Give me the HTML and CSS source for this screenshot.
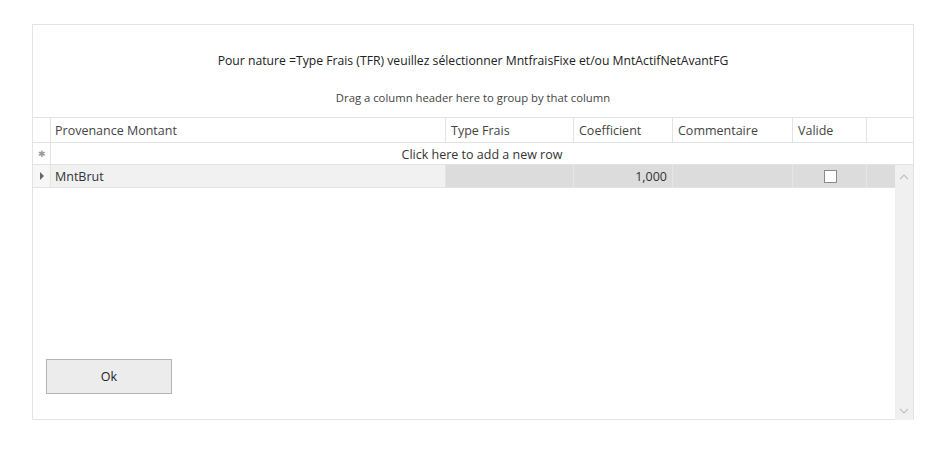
FILE: index.html
```html
<!DOCTYPE html>
<html lang="fr">
<head>
    <meta charset="UTF-8">
    <title>Provenance Montant</title>
    <link rel="stylesheet" href="styles.css">
</head>
<body>
    <div class="frame">
        <div class="group-panel">
            <div class="title">Pour nature =Type Frais (TFR) veuillez sélectionner MntfraisFixe et/ou MntActifNetAvantFG</div>
            <div class="drag-hint">Drag a column header here to group by that column</div>
        </div>

        <div class="row header-row">
            <div class="cell ind"></div>
            <div class="cell c-prov">Provenance Montant</div>
            <div class="cell c-type">Type Frais</div>
            <div class="cell c-coef">Coefficient</div>
            <div class="cell c-comm">Commentaire</div>
            <div class="cell c-valid">Valide</div>
            <div class="cell c-rest"></div>
        </div>

        <div class="row new-row">
            <div class="cell ind"><span class="star">&#10033;</span></div>
            <div class="cell add-row">Click here to add a new row</div>
        </div>

        <div class="grid-body">
            <div class="rows">
                <div class="row data-row">
                    <div class="cell ind"><span class="arrow"></span></div>
                    <div class="cell c-prov">MntBrut</div>
                    <div class="cell c-type"></div>
                    <div class="cell c-coef num">1,000</div>
                    <div class="cell c-comm"></div>
                    <div class="cell c-valid"><span class="check"></span></div>
                    <div class="cell c-last"></div>
                </div>
                <button class="ok-btn">Ok</button>
            </div>
            <div class="vscroll">
                <svg width="10" height="6" viewBox="0 0 10 6"><path d="M1 5 L5 1 L9 5" fill="none" stroke="#c2c2c2" stroke-width="1.2"/></svg>
                <svg width="10" height="6" viewBox="0 0 10 6"><path d="M1 1 L5 5 L9 1" fill="none" stroke="#c2c2c2" stroke-width="1.2"/></svg>
            </div>
        </div>
    </div>
</body>
</html>
```

FILE: styles.css
```css
body {
    margin: 0;
    background: white;
    font-family: 'Segoe UI', 'Open Sans', sans-serif;
    color: #333;
}
.frame {
    margin: 24px 0 0 32px;
    width: 880px;
    border: 1px solid #e3e3e3;
}
.group-panel {
    padding: 26px 0 11px;
    text-align: center;
}
.title {
    font-size: 12.2px;
    line-height: 20px;
    color: #222;
}
.drag-hint {
    margin-top: 19px;
    font-size: 11.3px;
    line-height: 16px;
    color: #444;
}
.row {
    display: flex;
    box-sizing: border-box;
    border-bottom: 1px solid #e3e3e3;
}
.cell {
    box-sizing: border-box;
    border-right: 1px solid #e3e3e3;
    padding: 0 4px;
    font-size: 12.5px;
    white-space: nowrap;
    overflow: hidden;
}
.ind { width: 18px; padding: 0; display: flex; align-items: center; justify-content: center; }
.c-prov { width: 395px; }
.c-type { width: 128px; }
.c-coef { width: 99px; }
.c-comm { width: 120px; }
.c-valid { width: 74px; }
.c-rest { width: 46px; border-right: none; }
.c-last { width: 28px; border-right: none; }

.header-row {
    border-top: 1px solid #e3e3e3;
    height: 26px;
    line-height: 26px;
    color: #444;
}
.header-row .c-type,
.header-row .c-coef,
.header-row .c-comm,
.header-row .c-valid { padding-left: 5px; }

.new-row {
    height: 22px;
    line-height: 23px;
}
.add-row {
    flex: 1;
    border-right: none;
    text-align: center;
}
.star {
    font-size: 9px;
    color: #9a9a9a;
    line-height: 1;
}
.arrow {
    width: 0;
    height: 0;
    border-top: 4px solid transparent;
    border-bottom: 4px solid transparent;
    border-left: 4px solid #666;
    margin-left: 1px;
}

.grid-body {
    display: flex;
    height: 254px;
}
.rows {
    flex: 1;
}
.data-row {
    height: 23px;
    line-height: 24px;
}
.data-row .cell {
    background: #dcdcdc;
    border-right-color: #e6e6e6;
}
.data-row .ind { background: #f7f7f7; border-right-color: #e3e3e3; }
.data-row .c-prov { background: #f1f1f1; border-right-color: #e3e3e3; }
.num { text-align: right; padding-right: 5px; }
.c-valid { display: flex; align-items: center; justify-content: center; }
.header-row .c-valid { display: block; }
.check {
    width: 11px;
    height: 11px;
    background: white;
    border: 1px solid #8a8a8a;
    margin-left: 2px;
}
.ok-btn {
    display: block;
    margin: 171px 0 0 13px;
    width: 126px;
    height: 35px;
    background: #ececec;
    border: 1px solid #b5b5b5;
    font-family: inherit;
    font-size: 12.5px;
    color: #222;
    padding: 0;
}
.vscroll {
    width: 18px;
    background: #f0f0f0;
    display: flex;
    flex-direction: column;
    justify-content: space-between;
    align-items: center;
    padding: 9px 0 6px;
    box-sizing: border-box;
    margin-bottom: -1px;
}
```
